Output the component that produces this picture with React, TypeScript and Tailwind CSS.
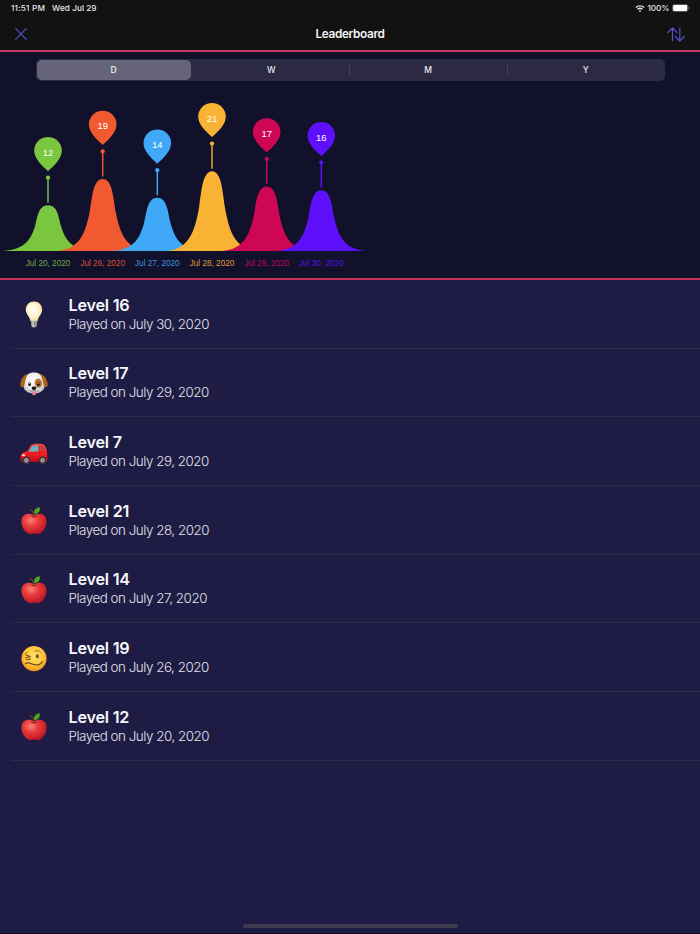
import React from 'react';

type Peak = { x: number; top: number; value: number; label: string; color: string };
type EmojiName = 'bulb' | 'dog' | 'car' | 'apple' | 'woozy';

const BASELINE = 251;

const peaks: Peak[] = [
  { x: 48, top: 205.3, value: 12, label: 'Jul 20, 2020', color: '#7ac63f' },
  { x: 102.7, top: 179, value: 19, label: 'Jul 26, 2020', color: '#f15a31' },
  { x: 157.3, top: 197.8, value: 14, label: 'Jul 27, 2020', color: '#3fa9f8' },
  { x: 212, top: 171.2, value: 21, label: 'Jul 28, 2020', color: '#f8b334' },
  { x: 266.7, top: 186.5, value: 17, label: 'Jul 29, 2020', color: '#ce0755' },
  { x: 321.3, top: 190.2, value: 16, label: 'Jul 30, 2020', color: '#5e10fb' },
];

const games: { emoji: EmojiName; level: number; date: string }[] = [
  { emoji: 'bulb', level: 16, date: 'July 30, 2020' },
  { emoji: 'dog', level: 17, date: 'July 29, 2020' },
  { emoji: 'car', level: 7, date: 'July 29, 2020' },
  { emoji: 'apple', level: 21, date: 'July 28, 2020' },
  { emoji: 'apple', level: 14, date: 'July 27, 2020' },
  { emoji: 'woozy', level: 19, date: 'July 26, 2020' },
  { emoji: 'apple', level: 12, date: 'July 20, 2020' },
];

const bellPath = ({ x, top }: Peak) => {
  const h = BASELINE - top;
  const y = (t: number) => top + h * t;
  return `M${x - 45} ${y(1)}C${x - 22} ${y(0.97)} ${x - 17} ${y(0.73)} ${x - 13} ${y(0.46)}C${x - 10.5} ${y(0.25)} ${x - 9.5} ${y(0)} ${x} ${y(0)}C${x + 9.5} ${y(0)} ${x + 10.5} ${y(0.25)} ${x + 13} ${y(0.46)}C${x + 17} ${y(0.73)} ${x + 22} ${y(0.97)} ${x + 45} ${y(1)}Z`;
};

// shared fills for the row emojis
const EmojiDefs = () => (
  <svg width="0" height="0" className="absolute">
    <defs>
      <radialGradient id="bulbGlass" cx=".45" cy=".45" r=".6">
        <stop offset="0" stopColor="#fffef6" />
        <stop offset=".55" stopColor="#fff6d4" />
        <stop offset="1" stopColor="#efd17c" />
      </radialGradient>
      <radialGradient id="appleSkin" cx=".38" cy=".32" r=".75">
        <stop offset="0" stopColor="#fb8078" />
        <stop offset=".4" stopColor="#e93a3b" />
        <stop offset="1" stopColor="#b51324" />
      </radialGradient>
      <radialGradient id="woozyFace" cx=".5" cy=".4" r=".6">
        <stop offset="0" stopColor="#ffe365" />
        <stop offset=".65" stopColor="#fdc236" />
        <stop offset="1" stopColor="#ee8d1d" />
      </radialGradient>
      <radialGradient id="dogFace" cx=".5" cy=".4" r=".6">
        <stop offset="0" stopColor="#ffffff" />
        <stop offset=".65" stopColor="#ececec" />
        <stop offset="1" stopColor="#b9b7ba" />
      </radialGradient>
      <linearGradient id="carBody" x1="0" y1="0" x2="0" y2="1">
        <stop offset="0" stopColor="#fa4b43" />
        <stop offset=".6" stopColor="#f01c20" />
        <stop offset="1" stopColor="#c10b17" />
      </linearGradient>
    </defs>
  </svg>
);

const Emoji = ({ name }: { name: EmojiName }) => (
  <svg viewBox="0 0 28 28" className="mt-[2px] size-7 shrink-0">
    {name === 'bulb' && (
      <>
        <path d="M14 .5c-4.700 0-8.200 3.500-8.200 8.100 0 4.300 3.500 6.800 4.300 10.300.2.8.5 1.400 1 1.400h5.800c.5 0 .8-.6 1-1.400.8-3.500 4.300-6 4.300-10.300 0-4.600-3.500-8.100-8.200-8.100z" fill="url(#bulbGlass)" />
        <path d="M10.800 19.800h6.400l-.4 4.600c-.1 1.200-1.300 2-2.800 2s-2.700-.8-2.800-2z" fill="#a4a5a8" />
        <path d="M11 21.600h6M11.200 23.600h5.600" stroke="#77797e" strokeWidth=".7" />
        <path d="M13 20v6" stroke="#d8d8da" strokeWidth="1" />
      </>
    )}
    {name === 'dog' && (
      <>
        <path d="M14 2.600c5 0 8.200 2.300 9.600 6.800 1.100 4 1.600 8-.6 10.700-2 2.400-5.200 3.500-9 3.500s-7-1.100-9-3.500C2.800 17.400 3.300 13.400 4.400 9.400 5.800 4.900 9 2.600 14 2.600z" fill="url(#dogFace)" />
        <path d="M8.400 3.900C4.200 4 2.200 7.500.8 11.800-.1 14.600.4 17 2 17c2.200 0 2.500-2.600 3-5.100.5-2.700 1.400-5.800 3.400-8z" fill="#b0631a" />
        <path d="M19.600 3.900c4.200.1 6.200 3.600 7.600 7.900.9 2.800.4 5.200-1.200 5.200-2.200 0-2.500-2.600-3-5.100-.5-2.700-1.400-5.800-3.400-8z" fill="#b0631a" />
        <ellipse cx="18.400" cy="13.200" rx="3.700" ry="4.600" fill="#b9712b" transform="rotate(-10 18.400 13.200)" />
        <ellipse cx="9.600" cy="14.200" rx="1.400" ry="2" fill="#27211f" />
        <ellipse cx="18.400" cy="14.200" rx="1.400" ry="2" fill="#27211f" />
        <circle cx="9.300" cy="13.400" r=".5" fill="#fff" />
        <circle cx="18.100" cy="13.400" r=".5" fill="#fff" />
        <path d="M12 21.800h4v1.700c0 1.200-.8 1.800-2 1.800s-2-.6-2-1.800z" fill="#f17b91" />
        <path d="M10 20.600c1.600 1.300 3.300.9 4-.3.700 1.200 2.400 1.600 4 .3M14 19v1.600" stroke="#6b5f5b" strokeWidth=".7" strokeLinecap="round" fill="none" />
        <path d="M11.600 17.900c0-.9 1-1.400 2.400-1.400s2.400.5 2.400 1.400-1.200 2.200-2.400 2.200-2.400-1.300-2.400-2.200z" fill="#201b1b" />
      </>
    )}
    {name === 'car' && (
      <>
        <path d="M.5 18.500c0-3.500 2.300-5.300 7-6.400l2.700-4.600c1-1.700 2.600-2.500 5.300-2.700 3.500-.3 7-.1 8.600 1.200 1.700 1.500 2.600 4.300 2.900 7.500l.5 7c0 1.500-.5 2.200-2 2.200H3.500C1.200 22.700.5 21.900.5 20.500z" fill="url(#carBody)" />
        <path d="M8.800 12.600l2.800-4.500c.9-1.300 2.500-1.700 6.600-1.700l.4 5.700c-3.500.8-7 .9-9.800.5z" fill="#69b2c8" />
        <path d="M20.500 6.500c1.600.1 2.500.5 3 1.300.6 1 1 2 1.200 3.200l-3.500.7z" fill="#a54a56" />
        <path d="M19.400 6.400l.4 12M8 13.500c4 .8 12 .3 18.500-1" stroke="#cb121b" strokeWidth=".5" fill="none" />
        <ellipse cx="3.500" cy="16.300" rx="1.700" ry="1" fill="#ffe4d4" />
        <path d="M.8 20.400l3 .6" stroke="#85181d" strokeWidth="1" />
        <circle cx="6.400" cy="21.300" r="3.700" fill="#3a383c" />
        <circle cx="22.600" cy="21.300" r="3.700" fill="#3a383c" />
        <circle cx="6.400" cy="21.300" r="2.200" fill="#a5a5ab" />
        <circle cx="22.600" cy="21.300" r="2.200" fill="#a5a5ab" />
        <circle cx="6.400" cy="21.300" r=".8" fill="#606066" />
        <circle cx="22.600" cy="21.300" r=".8" fill="#606066" />
      </>
    )}
    {name === 'apple' && (
      <>
        <path d="M14 8.300c2-1.300 4-1.900 6.500-1.500 3.800.6 6 3.600 6 7.400 0 4.800-2.300 9.400-5.700 11.800-2.200 1.500-3.900 1.300-5.400.8-.9-.3-1.900-.3-2.800 0-1.500.5-3.200.7-5.400-.8C3.800 23.600 1.500 19 1.500 14.200c0-3.800 2.200-6.800 6-7.400C10 6.400 12 7 14 8.300z" fill="url(#appleSkin)" />
        <path d="M10.500 8.200c1.800 1.400 5.200 1.400 7 0-1.500 2.700-5.500 2.700-7 0z" fill="#9f1723" />
        <path d="M14 9.200C14 6.500 12.600 4 10.400 2.700" stroke="#76421f" strokeWidth="1.200" strokeLinecap="round" fill="none" />
        <path d="M14 6.800c-.2-3.800 1.600-6.200 5.700-6.600.6 4.100-1.500 6.800-5.700 6.600z" fill="#54ae24" />
        <path d="M14.400 6.400c1.300-1.500 2.900-3.500 4.800-5.500" stroke="#338018" strokeWidth=".5" />
      </>
    )}
    {name === 'woozy' && (
      <>
        <circle cx="14" cy="13.600" r="12.600" fill="url(#woozyFace)" />
        <path d="M6 10l4.300 1.500-4.500 1.300M6.300 14.300c1.500.4 3 .1 4.200-.6" stroke="#75501d" strokeWidth="1.100" strokeLinecap="round" strokeLinejoin="round" fill="none" />
        <ellipse cx="17.300" cy="11.300" rx="1.500" ry="2.100" fill="#75501d" />
        <path d="M14.800 6.400c2-1.300 4.400-1 5.600.7M4.800 9c1.300-.5 2.300-1 3-2" stroke="#a36b20" strokeWidth="1" strokeLinecap="round" fill="none" />
        <path d="M5.500 18.700c1.700-1.200 3.700-.9 6 .1 2.800 1.200 5.500 1.500 8 .5 1.500-.6 2.300-1.400 2.800-2.700" stroke="#75501d" strokeWidth="1.300" strokeLinecap="round" fill="none" />
      </>
    )}
  </svg>
);

const StatusBar = () => (
  <div className="flex h-[17px] items-center justify-between pr-[10px] pl-[11px] text-[8.200px] font-medium text-[#e8e8e8]">
    <div className="flex gap-[7px]">
      <span className="tracking-[0.180px]">11:51 PM</span>
      <span className="tracking-[0.050px]">Wed Jul 29</span>
    </div>
    <div className="flex items-center gap-[2.500px]">
      <svg viewBox="0 0 18 14" className="h-[7.500px] w-[10px]" fill="none" stroke="#eee" strokeWidth="2.400">
        <path d="M1.300 4.800c4.400-4 11-4 15.400 0M4.300 8.200c2.700-2.500 6.700-2.500 9.400 0" />
        <path d="M6.500 10.700c1.500-1.300 3.500-1.300 5 0L9 13.300z" fill="#eee" stroke="none" />
      </svg>
      <span>100%</span>
      <svg viewBox="0 0 18 8" className="h-2 w-[18px]">
        <rect x=".4" y=".4" width="15.600" height="7.200" rx="2" fill="#111" stroke="#7b7b7b" strokeWidth=".7" />
        <rect x="1.100" y="1.100" width="14.200" height="5.800" rx="1.300" fill="#fff" />
        <path d="M16.800 2.700c1 .4 1 2.200 0 2.600z" fill="#777" />
      </svg>
    </div>
  </div>
);

const NavBar = () => (
  <div className="grid h-[34px] grid-cols-[1fr_auto_1fr] items-center px-[15px]">
    <svg viewBox="0 0 12 12" className="size-3" stroke="#5551d3" strokeWidth="1.100" strokeLinecap="round">
      <path d="M.7.7l10.600 10.600M11.300.7L.7 11.300" />
    </svg>
    <h1 className="pt-px text-[11.800px] font-semibold tracking-[-0.340px] text-[#f4f4f4]">Leaderboard</h1>
    <svg viewBox="0 0 18 15" className="h-[15px] w-[18px] justify-self-end" fill="none" stroke="#5551d3" strokeWidth="1.200" strokeLinecap="round" strokeLinejoin="round">
      <path d="M5.500 13.500V1M.8 5.500L5.500.8l4.500 4.700M12.800 1v12.900M8.300 9.500l4.500 4.600 4.500-4.600" />
    </svg>
  </div>
);

const RangePicker = () => (
  <div className="mr-[35px] ml-[35.500px] flex h-[22px] rounded-[5px] bg-[#2b2a42] p-[1px] text-[8.500px] font-medium text-[#e8e8ed]">
    <div className="flex w-[154px] items-center justify-center rounded-[5px] bg-[#656479] font-semibold">D</div>
    <div className="grid flex-1 grid-cols-3 items-center pl-px text-center">
      <span className="pl-[2px]">W</span>
      <span className="border-l border-[#414057]">M</span>
      <span className="border-l border-[#414057]">Y</span>
    </div>
  </div>
);

const Chart = () => (
  <svg viewBox="0 81 700 197" className="block h-[197px] w-full">
    {peaks.map((p) => (
      <g key={p.label} fill={p.color}>
        <path d={bellPath(p)} />
        <path d={`M${p.x} ${p.top - 2.500}V${p.top - 27}`} stroke={p.color} strokeWidth="1.400" />
        <circle cx={p.x} cy={p.top - 27.600} r="2.100" />
        <path
          transform={`translate(${p.x} ${p.top - 68.300})`}
          d="M0 0C7.700 0 13.800 6 13.800 13.600C13.800 21.500 6.800 28 0 34.200C-6.800 28-13.800 21.500-13.800 13.600C-13.800 6-7.700 0 0 0Z"
        />
        <text x={p.x} y={p.top - 49.700} textAnchor="middle" fill="#fff" className="font-['Liberation_Sans',sans-serif] text-[9.500px]">
          {p.value}
        </text>
        <text x={p.x} y="265.700" textAnchor="middle" className="font-['Liberation_Sans',sans-serif] text-[8.200px]" fillOpacity=".9">
          {p.label}
        </text>
      </g>
    ))}
  </svg>
);

export default function App() {
  return (
    <div className="relative flex h-[934px] w-[700px] flex-col overflow-hidden bg-[#1e1c44] font-['Inter',sans-serif]">
      <EmojiDefs />
      <header className="h-[52px] border-b-2 border-[#c83a5d] bg-[#121212]">
        <StatusBar />
        <NavBar />
      </header>
      <section className="h-[228px] border-b-2 border-[#c83252] bg-[#12112c] pt-[7px]">
        <RangePicker />
        <Chart />
      </section>
      <ul>
        {games.map((game) => (
          <li key={`${game.level}-${game.date}`} className="flex h-[68.700px] items-center pl-[20px]">
            <Emoji name={game.emoji} />
            <div className="ml-[-37px] flex h-full flex-1 items-center border-b border-[#2b294c] pl-[57.500px]">
              <div className="pt-px">
                <div className="text-[16.200px] leading-5 font-semibold tracking-[-0.220px] text-[#f7f7fb]">Level {game.level}</div>
                <div className="text-[13.400px] leading-[19.500px] font-light tracking-[-0.480px] text-[#e2e2eb]">Played on {game.date}</div>
              </div>
            </div>
          </li>
        ))}
      </ul>
      <div className="mt-auto mb-[5px] h-1 w-[215px] self-center rounded-full bg-[#3e3a4e]" />
      <div className="h-px bg-[#100f27]" />
    </div>
  );
}
